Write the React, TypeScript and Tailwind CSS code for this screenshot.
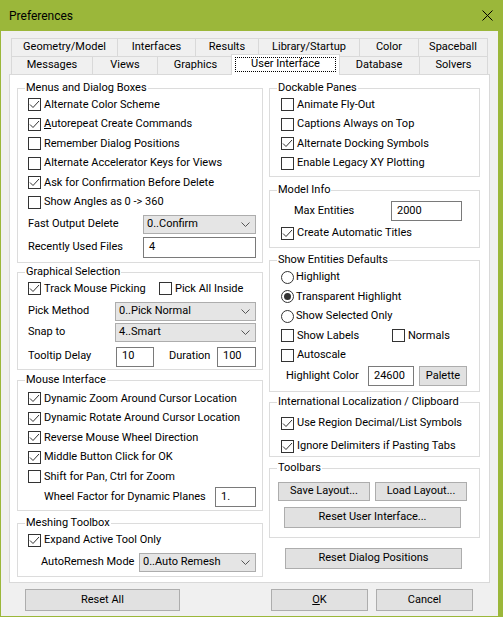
import * as React from 'react';

const FONT = "font-['Roboto',sans-serif]";

type CheckProps = {
  label: React.ReactNode;
  checked?: boolean;
  className?: string;
}

const Check = ({ label, checked, className }: CheckProps) => (
  <div className={`flex items-center h-[19.5px] ${className ?? ''}`}>
    <div className="w-[13px] h-[13px] border border-[#333] bg-white shrink-0 flex items-center justify-center">
      {checked && (
        <svg width="11" height="11" viewBox="0 0 11 11">
          <polyline points="1,5.5 4,8.5 10,2" fill="none" stroke="#333" strokeWidth="1" />
        </svg>
      )}
    </div>
    <span className="ml-[3px] whitespace-nowrap">{label}</span>
  </div>
);

const Radio = ({ label, checked }: { label: string; checked?: boolean }) => (
  <div className="flex items-center h-[19.5px]">
    <div className="w-[13px] h-[13px] rounded-full border border-[#333] bg-white shrink-0 flex items-center justify-center">
      {checked && <div className="w-[7px] h-[7px] rounded-full bg-[#333]" />}
    </div>
    <span className="ml-[2px] whitespace-nowrap">{label}</span>
  </div>
);

const Combo = ({ value, className }: { value: string; className?: string }) => (
  <div className={`h-[19px] border border-[#adadad] bg-[#e5e5e5] flex items-center justify-between pl-[3px] pr-[5px] ${className ?? ''}`}>
    <span className="whitespace-nowrap">{value}</span>
    <svg width="9" height="5" viewBox="0 0 9 5">
      <polyline points="0.5,0.5 4.5,4.5 8.5,0.5" fill="none" stroke="#555" strokeWidth="1" />
    </svg>
  </div>
);

const Field = ({ value, className }: { value: string; className?: string }) => (
  <div className={`h-[20px] border border-[#7a7a7a] bg-white flex items-center pl-[5px] ${className ?? ''}`}>
    {value}
  </div>
);

const Btn = ({ children, className }: { children: React.ReactNode; className?: string }) => (
  <div className={`border border-[#adadad] bg-[#e1e1e1] flex items-center justify-center whitespace-nowrap ${className ?? ''}`}>
    {children}
  </div>
);

type GroupProps = {
  title: string;
  className?: string;
  children: React.ReactNode;
}

const Group = ({ title, className, children }: GroupProps) => (
  <fieldset className={`border border-[#dcdcdc] min-w-0 ${className ?? ''}`}>
    <legend className="ml-[7px] px-[1px] leading-[14px]">{title}</legend>
    {children}
  </fieldset>
);

const row1 = [
  { label: 'Geometry/Model', w: 'w-[106px]' },
  { label: 'Interfaces', w: 'w-[78px]' },
  { label: 'Results', w: 'w-[63px]' },
  { label: 'Library/Startup', w: 'w-[101px]' },
  { label: 'Color', w: 'w-[59px]' },
  { label: 'Spaceball', w: 'w-[70px]' },
];

const row2 = [
  { label: 'Messages', w: 'w-[81px]' },
  { label: 'Views', w: 'w-[65px]' },
  { label: 'Graphics', w: 'w-[76px]' },
  { label: 'User Interface', w: 'w-[109px]', active: true },
  { label: 'Database', w: 'w-[81px]' },
  { label: 'Solvers', w: 'w-[69px]' },
];

const TabRow = ({ tabs }: { tabs: { label: string; w: string; active?: boolean }[] }) => (
  <div className="flex h-[18px] ml-[2px] items-start">
    {tabs.map((t, i) =>
      t.active ? (
        <div
          key={t.label}
          className={`${t.w} relative z-10 -mx-[2px] -mt-[2px] h-[21px] bg-white border-l border-t border-r border-[#d9d9d9]`}
        >
          <div className="mx-[3px] mt-[2px] h-[15px] border border-dotted border-black flex items-center justify-center">
            {t.label}
          </div>
        </div>
      ) : (
        <div
          key={t.label}
          className={`${t.w} h-[18px] bg-[#f0f0f0] border-t border-l border-[#d9d9d9] flex items-center justify-center ${i === tabs.length - 1 ? 'border-r' : ''}`}
        >
          {t.label}
        </div>
      )
    )}
  </div>
);

export default function App() {
  return (
    <div className={`${FONT} w-[503px] h-[617px] bg-[#9bb73a] flex flex-col text-[11px] text-black`}>
      <div className="h-[31px] shrink-0 flex items-center justify-between pl-[9px] pr-[10px] text-[12px]">
        <span>Preferences</span>
        <svg width="11" height="11" viewBox="0 0 11 11">
          <line x1="0.5" y1="0.5" x2="10.5" y2="10.5" stroke="#000" strokeWidth="1" />
          <line x1="10.5" y1="0.5" x2="0.5" y2="10.5" stroke="#000" strokeWidth="1" />
        </svg>
      </div>

      <div className="ml-[1px] w-[497px] h-[585px] bg-[#f0f0f0] pl-[8px] pt-[7px] flex flex-col">
        <TabRow tabs={row1} />
        <TabRow tabs={row2} />

        <div className="w-[481px] h-[509px] bg-white border border-[#d9d9d9] pl-[7px] pt-[6px] flex gap-[6px]">
          {/* left column */}
          <div className="w-[246px] flex flex-col">
            <Group title="Menus and Dialog Boxes" className="h-[182px]">
              <div className="pl-[10px]">
                <Check checked label="Alternate Color Scheme" />
                <Check checked label={<><span className="underline">A</span>utorepeat Create Commands</>} />
                <Check label="Remember Dialog Positions" />
                <Check label="Alternate Accelerator Keys for Views" />
                <Check checked label="Ask for Confirmation Before Delete" />
                <Check label="Show Angles as 0 -> 360" />
                <div className="flex items-center mt-[3px]">
                  <span className="w-[115px]">Fast Output Delete</span>
                  <Combo value="0..Confirm" className="w-[113px]" />
                </div>
                <div className="flex items-center mt-[3px]">
                  <span className="w-[115px]">Recently Used Files</span>
                  <Field value="4" className="w-[113px] h-[21px]" />
                </div>
              </div>
            </Group>

            <Group title="Graphical Selection" className="h-[105px] mt-[2px]">
              <div className="pl-[10px]">
                <div className="flex">
                  <Check checked label="Track Mouse Picking" className="w-[131px]" />
                  <Check label="Pick All Inside" />
                </div>
                <div className="flex items-center mt-[3px]">
                  <span className="w-[87px]">Pick Method</span>
                  <Combo value="0..Pick Normal" className="w-[141px]" />
                </div>
                <div className="flex items-center mt-[2px]">
                  <span className="w-[87px]">Snap to</span>
                  <Combo value="4..Smart" className="w-[141px]" />
                </div>
                <div className="flex items-center mt-[5px]">
                  <span className="w-[88px]">Tooltip Delay</span>
                  <Field value="10" className="w-[38px]" />
                  <span className="w-[48px] ml-[15px]">Duration</span>
                  <Field value="100" className="w-[39px]" />
                </div>
              </div>
            </Group>

            <Group title="Mouse Interface" className="h-[138px] mt-[3px]">
              <div className="pl-[10px] pt-[2px]">
                <Check checked label="Dynamic Zoom Around Cursor Location" />
                <Check checked label="Dynamic Rotate Around Cursor Location" />
                <Check checked label="Reverse Mouse Wheel Direction" />
                <Check checked label="Middle Button Click for OK" />
                <Check label="Shift for Pan, Ctrl for Zoom" />
                <div className="flex items-center mt-[0.5px]">
                  <span className="w-[171px] ml-[16px] whitespace-nowrap">Wheel Factor for Dynamic Planes</span>
                  <Field value="1." className="w-[41px]" />
                </div>
              </div>
            </Group>

            <Group title="Meshing Toolbox" className="h-[61px] mt-[5px]">
              <div className="pl-[10px]">
                <Check checked label="Expand Active Tool Only" className="h-[20px]" />
                <div className="flex items-center mt-[3px]">
                  <span className="w-[98px] ml-[13px] whitespace-nowrap">AutoRemesh Mode</span>
                  <Combo value="0..Auto Remesh" className="w-[117px]" />
                </div>
              </div>
            </Group>
          </div>

          {/* right column */}
          <div className="w-[211px] flex flex-col">
            <Group title="Dockable Panes" className="h-[96px]">
              <div className="pl-[11px]">
                <Check label="Animate Fly-Out" />
                <Check label="Captions Always on Top" />
                <Check checked label="Alternate Docking Symbols" />
                <Check label="Enable Legacy XY Plotting" />
              </div>
            </Group>

            <Group title="Model Info" className="h-[65px] mt-[6px]">
              <div className="pl-[11px]">
                <div className="flex items-center mt-[4px]">
                  <span className="w-[97px] ml-[13px]">Max Entities</span>
                  <Field value="2000" className="w-[71px]" />
                </div>
                <Check checked label="Create Automatic Titles" className="mt-[2.5px]" />
              </div>
            </Group>

            <Group title="Show Entities Defaults" className="h-[139px] mt-[5px]">
              <div className="pl-[11px] pt-[0.5px]">
                <Radio label="Highlight" />
                <Radio checked label="Transparent Highlight" />
                <Radio label="Show Selected Only" />
                <div className="flex">
                  <Check label="Show Labels" className="w-[111px]" />
                  <Check label="Normals" />
                </div>
                <Check label="Autoscale" />
                <div className="flex items-center h-[20px] mt-[1px]">
                  <span className="w-[82px] ml-[5px]">Highlight Color</span>
                  <Field value="24600" className="w-[46px] h-[19px]" />
                  <Btn className="w-[48px] h-[20px] ml-[5px]">Palette</Btn>
                </div>
              </div>
            </Group>

            <Group title="International Localization / Clipboard" className="h-[62px] mt-[3px]">
              <div className="pl-[11px] pt-[4px]">
                <Check checked label="Use Region Decimal/List Symbols" className="h-[20px]" />
                <Check checked label="Ignore Delimiters if Pasting Tabs" className="h-[20px] mt-[3px]" />
              </div>
            </Group>

            <Group title="Toolbars" className="h-[77px] mt-[4px]">
              <div className="pl-[8px]">
                <div className="flex gap-[5px] mt-[7px]">
                  <Btn className="w-[92px] h-[19px]">Save Layout...</Btn>
                  <Btn className="w-[92px] h-[19px]">Load Layout...</Btn>
                </div>
                <Btn className="w-[177px] h-[21px] mt-[6px] ml-[6px]">Reset User Interface...</Btn>
              </div>
            </Group>

            <Btn className="w-[177px] h-[21px] mt-[10px] ml-[16px]">Reset Dialog Positions</Btn>
          </div>
        </div>

        <div className="flex mt-[6px] pl-[16px]">
          <Btn className="w-[155px] h-[22px]">Reset All</Btn>
          <Btn className="w-[97px] h-[22px] ml-[91px]"><span className="underline">O</span>K</Btn>
          <Btn className="w-[97px] h-[22px] ml-[8px]">Cancel</Btn>
        </div>
      </div>
    </div>
  );
}
